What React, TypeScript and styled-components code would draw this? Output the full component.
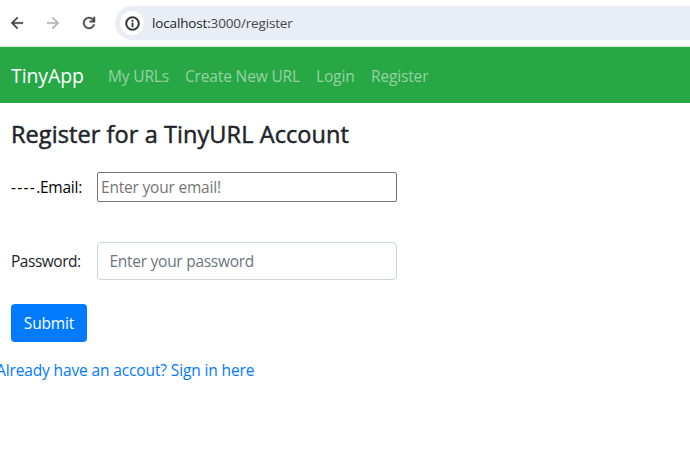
import React from "react";
import styled, { createGlobalStyle } from "styled-components";

const GlobalStyle = createGlobalStyle`
  *, *::before, *::after { box-sizing: border-box; }
  body {
    margin: 0;
    background: #fff;
    color: #212529;
    font: 400 16px/24px "Segoe UI", "Open Sans", "Noto Sans", sans-serif;
    overflow: hidden;
  }
`;

const Toolbar = styled.header`
  display: flex;
  align-items: center;
  height: 47px;
  padding-left: 8px;
  border-bottom: 1px solid #dfe1e1;
`;

const ToolIcon = styled.svg<{ $gap: number; $color?: string }>`
  flex: none;
  width: 18px;
  height: 18px;
  margin-right: ${(p) => p.$gap}px;
  fill: ${(p) => p.$color ?? "#474747"};
  stroke: ${(p) => p.$color ?? "#474747"};
  stroke-width: 0.6;
`;

const AddressBar = styled.div`
  display: flex;
  align-items: center;
  flex: 1;
  height: 34px;
  padding-left: 5px;
  border-radius: 17px 0 0 17px;
  background: #e9edf6;
`;

const SiteInfo = styled.span`
  display: grid;
  place-items: center;
  width: 24px;
  height: 24px;
  margin-right: 8px;
  border-radius: 50%;
  background: #fff;

  svg {
    width: 17px;
    height: 17px;
    fill: #303134;
    stroke: #303134;
    stroke-width: 0.5;
  }
`;

const Address = styled.span`
  color: #1f1f1f;
  font-size: 13.5px;
  line-height: 20px;
  letter-spacing: -0.15px;
  white-space: nowrap;

  span { color: #474747; }
`;

const Navbar = styled.nav`
  display: flex;
  align-items: center;
  height: 56px;
  padding: 1px 11px 0;
  background: #28a745;
`;

const Brand = styled.a`
  width: 97px;
  color: #fff;
  font-size: 19.5px;
  line-height: 30px;
  letter-spacing: -0.1px;
`;

const NavLink = styled.a<{ $width: number }>`
  width: ${(p) => p.$width}px;
  color: rgba(255, 255, 255, 0.5);
  font-size: 15.5px;
  letter-spacing: -0.15px;
  white-space: nowrap;
`;

const Main = styled.main`
  padding: 17px 11px 0;
`;

const Title = styled.h4`
  margin: 0 0 23px;
  font-size: 23.5px;
  font-weight: 500;
  line-height: 29px;
  letter-spacing: 0.08px;
  -webkit-text-stroke: 0.5px currentColor;
  white-space: nowrap;
`;

const Field = styled.div<{ $gap: number }>`
  display: flex;
  align-items: center;
  margin-bottom: ${(p) => p.$gap}px;
`;

const Label = styled.label<{ $tracking: number; $color?: string }>`
  width: 86px;
  color: ${(p) => p.$color ?? "#212529"};
  font-size: 15.5px;
  letter-spacing: ${(p) => p.$tracking}px;
  white-space: nowrap;
`;

const Dashes = styled.span`
  letter-spacing: 1.3px;
`;

const Input = styled.input`
  width: 300px;
  height: 30px;
  padding: 0 4px 1px 3px;
  border: 1px solid #767676;
  border-radius: 2px;
  background: #fff;
  font: inherit;
  font-size: 15.5px;
  letter-spacing: -0.2px;
  outline: none;

  &::placeholder { color: #757575; opacity: 1; }
`;

const FormControl = styled(Input)`
  height: 38px;
  padding: 6px 12px 6px 11.5px;
  border-color: #ced4da;
  border-radius: 4px;
  letter-spacing: -0.27px;

  &::placeholder { color: #6c757d; }
`;

const SubmitButton = styled.button`
  display: block;
  width: 76px;
  height: 38px;
  margin: 0 0 16px;
  padding: 0;
  border: 0;
  border-radius: 4px;
  background: #007bff;
  color: #fff;
  font: inherit;
  font-size: 15.5px;
  letter-spacing: -0.15px;
`;

const SignInLink = styled.a`
  display: block;
  margin-left: -15px;
  color: #007bff;
  font-size: 15.5px;
  letter-spacing: -0.13px;
  white-space: nowrap;
`;

const links = [
  { label: "My URLs", width: 77 },
  { label: "Create New URL", width: 131 },
  { label: "Login", width: 55 },
  { label: "Register", width: 70 },
];

export default function App() {
  return (
    <>
      <GlobalStyle />
      <Toolbar>
        <ToolIcon viewBox="0 0 24 24" $gap={18}>
          <path d="M20 11H7.83l5.59-5.59L12 4l-8 8 8 8 1.41-1.41L7.83 13H20v-2z" />
        </ToolIcon>
        <ToolIcon viewBox="0 0 24 24" $gap={18} $color="#b5b5b5">
          <path d="M4 11h12.17l-5.59-5.59L12 4l8 8-8 8-1.41-1.41L16.17 13H4v-2z" />
        </ToolIcon>
        <ToolIcon viewBox="0 0 24 24" $gap={17}>
          <path d="M12 20q-3.35 0-5.675-2.325T4 12t2.325-5.675T12 4q1.725 0 3.3.713T18 6.75V4h2v7h-7V9h4.2q-.8-1.4-2.187-2.2T12 6Q9.5 6 7.75 7.75T6 12t1.75 4.25T12 18q1.925 0 3.475-1.1T17.65 14h2.1q-.7 2.65-2.85 4.325T12 20" />
        </ToolIcon>
        <AddressBar>
          <SiteInfo>
            <svg viewBox="0 0 24 24">
              <path d="M11 17h2v-6h-2v6zm1-15a10 10 0 1 0 0 20 10 10 0 0 0 0-20zm0 17.7a7.7 7.7 0 1 1 0-15.4 7.7 7.7 0 0 1 0 15.4zM11 9h2V7h-2v2z" />
            </svg>
          </SiteInfo>
          <Address>localhost:<span>3000/register</span></Address>
        </AddressBar>
      </Toolbar>
      <Navbar>
        <Brand>TinyApp</Brand>
        {links.map((l) => (
          <NavLink key={l.label} $width={l.width}>
            {l.label}
          </NavLink>
        ))}
      </Navbar>
      <Main>
        <Title>Register for a TinyURL Account</Title>
        <Field $gap={40}>
          <Label $tracking={-0.25} $color="#000"><Dashes>----</Dashes>.Email:</Label>
          <Input type="email" placeholder="Enter your email!" />
        </Field>
        <Field $gap={24}>
          <Label $tracking={-0.48}>Password:</Label>
          <FormControl type="password" placeholder="Enter your password" />
        </Field>
        <SubmitButton>Submit</SubmitButton>
        <SignInLink>Already have an accout? Sign in here</SignInLink>
      </Main>
    </>
  );
}
